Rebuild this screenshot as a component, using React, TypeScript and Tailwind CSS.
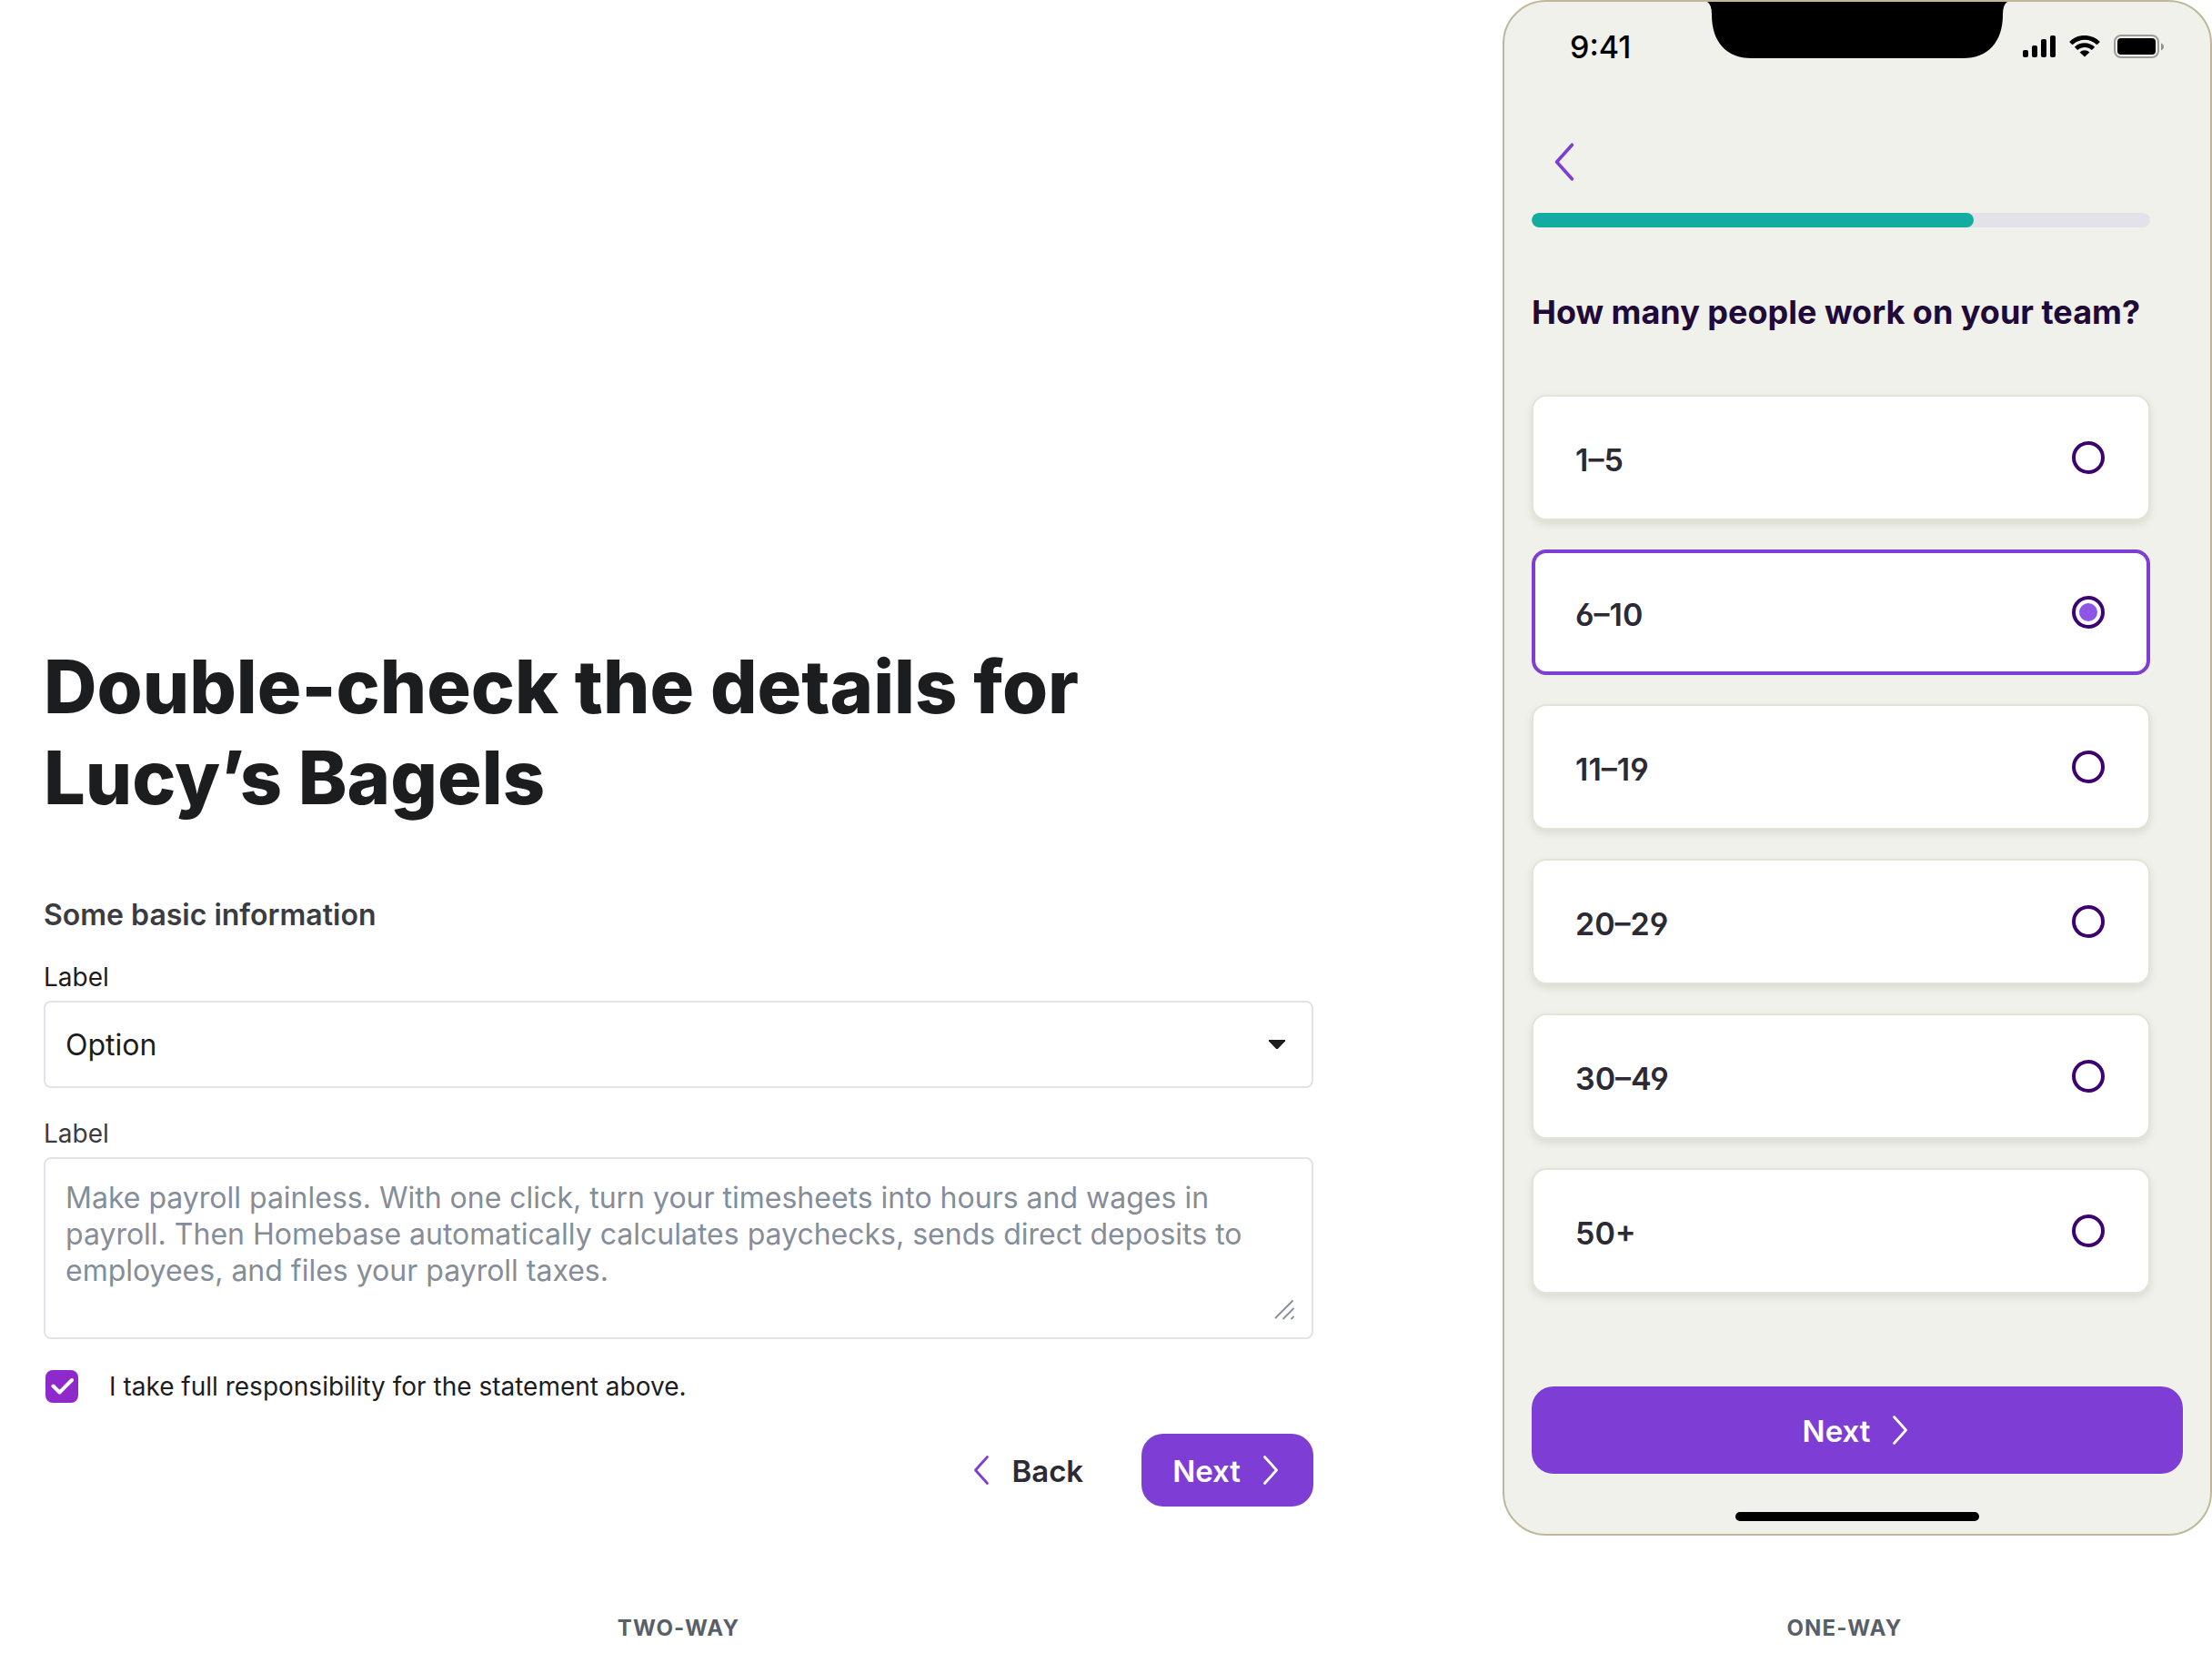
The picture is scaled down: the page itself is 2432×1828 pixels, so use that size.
import { useState } from "react";

const sizes = ["1–5", "6–10", "11–19", "20–29", "30–49", "50+"];

function Chevron({ dir, className }: { dir: "left" | "right"; className: string }) {
  return (
    <svg viewBox="0 0 18 34" className={className} fill="none" stroke="currentColor" strokeWidth="2.8" strokeLinecap="round" strokeLinejoin="round" aria-hidden="true">
      <path d={dir === "left" ? "M15.500 2.500 2.500 17 15.500 31.500" : "M2.500 2.500 15.500 17 2.500 31.500"} />
    </svg>
  );
}

function StatusIcons() {
  return (
    <div className="flex items-center gap-[15px]">
      <svg viewBox="0 0 36 24" className="h-6 w-9" fill="#000" aria-label="Signal">
        <rect x="0" y="16" width="6" height="8" rx="2" />
        <rect x="10" y="11" width="6" height="13" rx="2" />
        <rect x="20" y="4" width="6" height="20" rx="2" />
        <rect x="30" y="0" width="6" height="24" rx="2" />
      </svg>
      <svg viewBox="0 0 34 24" className="h-6 w-[34px]" aria-label="Wi-Fi">
        <g fill="none" stroke="#000" strokeWidth="4.8">
          <path d="M1.800 8.600a21.600 21.600 0 0 1 30.400 0" />
          <path d="M7.500 14.400a13.600 13.600 0 0 1 19 0" />
        </g>
        <path d="M17 23.600 11.600 18.400a7.800 7.800 0 0 1 10.800 0z" />
      </svg>
      <svg viewBox="0 0 56 26" className="h-[26px] w-14" aria-label="Battery">
        <rect x="1" y="1" width="48" height="24" rx="7" fill="none" stroke="#000" strokeOpacity=".35" strokeWidth="2" />
        <rect x="4" y="4" width="42" height="18" rx="4" />
        <path d="M52 9.500v8c1.800-.8 3-2.200 3-4s-1.200-3.200-3-4z" fillOpacity=".4" />
      </svg>
    </div>
  );
}

export default function App() {
  const [team, setTeam] = useState("6–10");
  const [agree, setAgree] = useState(true);
  return (
    <main className="flex w-full items-end gap-[208px] bg-white pb-[22px] font-['Inter',sans-serif] text-[#1c1d1f]">
      <section className="flex min-w-0 flex-1 flex-col pl-12">
        <h1 className="text-[81px] leading-[100px] font-extrabold">
          Double-check the details for
          <br />
          Lucy’s Bagels
        </h1>
        <h2 className="mt-[81px] text-[32px] leading-10 font-semibold text-[#3a3c42]">Some basic information</h2>
        <label htmlFor="option" className="mt-[30px] text-[28px] leading-9">Label</label>
        <div className="relative mt-2">
          <select id="option" className="h-24 w-full appearance-none rounded-lg border-2 border-[#e2e2e8] bg-white px-[22px] pt-0.5 text-[32px]">
            <option>Option</option>
          </select>
          <svg viewBox="0 0 18 10" className="pointer-events-none absolute top-[43px] right-[31px] h-[10px] w-[18px]" aria-hidden="true">
            <path d="M0 0h18v1.500L9.800 10H8.200L0 1.500z" fill="#1c1d1f" />
          </svg>
        </div>
        <label htmlFor="statement" className="mt-8 text-[28px] leading-9 text-[#3a3c42]">Label</label>
        <div className="relative mt-2 flex">
          <textarea
            id="statement"
            className="h-[200px] w-full resize-none rounded-lg border-2 border-[#e2e2e8] px-[22px] pt-[23px] text-[32px] leading-10 placeholder:text-[#858d99]"
            placeholder="Make payroll painless. With one click, turn your timesheets into hours and wages in payroll. Then Homebase automatically calculates paychecks, sends direct deposits to employees, and files your payroll taxes."
          />
          <svg viewBox="0 0 22 22" className="pointer-events-none absolute right-[21px] bottom-[21px] h-[22px] w-[22px]" fill="none" stroke="#858d99" strokeWidth="1.800" strokeLinecap="round" aria-hidden="true">
            <path d="M1.500 19.500 20 1M10 20.500 21 9.500M19 20.500l2-2" />
          </svg>
        </div>
        <label className="mt-8 flex items-center gap-[34px] pl-0.5 text-[28px] leading-10">
          <span className="relative flex">
            <input type="checkbox" checked={agree} onChange={(e) => setAgree(e.target.checked)} className="size-9 appearance-none rounded-lg border-2 border-[#8e29cc] checked:bg-[#8e29cc]" />
            {agree && (
              <svg viewBox="0 0 36 36" className="pointer-events-none absolute inset-0" fill="none" stroke="#fff" strokeWidth="4" strokeLinecap="round" strokeLinejoin="round" aria-hidden="true">
                <path d="m8.500 17.500 7 7L29 11" />
              </svg>
            )}
          </span>
          I take full responsibility for the statement above.
        </label>
        <div className="mt-8 flex items-center justify-end gap-8 text-[33px] font-semibold">
          <button type="button" className="flex h-20 items-center gap-6 px-8 text-[#2b2a35]">
            <Chevron dir="left" className="h-[34px] w-[18px] text-[#7e3dd4]" />
            <span className="pt-1">Back</span>
          </button>
          <button type="button" className="flex h-20 items-center gap-6 rounded-3xl bg-[#7e3dd4] pr-[38px] pl-[34px] text-white">
            <span className="pt-1">Next</span>
            <Chevron dir="right" className="h-[34px] w-[18px]" />
          </button>
        </div>
        <p className="mt-[118px] text-center text-2xl leading-8 font-bold tracking-wider text-[#585f67]">TWO-WAY</p>
      </section>

      <section className="flex w-[780px] shrink-0 flex-col">
        <div className="flex flex-col rounded-[48px] border-2 border-[#bdb99a] bg-[#f0f1eb] px-[30px] pb-[14px]">
          <header className="grid h-[102px] grid-cols-[1fr_330px_1fr] items-start">
            <time className="pt-[29px] pl-[42px] text-[34px] leading-[42px] font-medium text-black">9:41</time>
            <svg viewBox="0 0 330 62" className="h-[62px] w-[330px]" aria-hidden="true">
              <path d="M0 0h330q-5 3-5 14c0 30-16 48-44 48H49C21 62 5 44 5 14Q5 3 0 0z" />
            </svg>
            <div className="flex justify-end pt-9 pr-5">
              <StatusIcons />
            </div>
          </header>
          <button type="button" aria-label="Go back" className="mt-[52px] ml-6 flex h-11 w-8 items-center text-[#7e3dd4]">
            <Chevron dir="left" className="h-11 w-6" />
          </button>
          <div className="mr-9 flex flex-col">
            <div role="progressbar" aria-valuenow={71} className="mt-[34px] h-4 overflow-hidden rounded-full bg-[#e2e2e8]">
              <div className="h-full w-[71.500%] rounded-full bg-[#12aca1]" />
            </div>
            <h2 id="team" className="mt-[71px] text-4xl leading-[44px] font-bold whitespace-nowrap text-[#1f0a38]">How many people work on your team?</h2>
            <div role="radiogroup" aria-labelledby="team" className="mt-[69px] flex flex-col gap-8">
              {sizes.map((s) => (
                <label key={s} className="flex h-[138px] items-center justify-between rounded-2xl border-2 border-[#e5e3d5] bg-white pr-12 pl-[46px] text-[34px] font-semibold text-[#2b2a35] shadow-[0_4px_8px_rgba(60,60,30,0.12)] [font-feature-settings:'cv03','cv04'] has-checked:border-4 has-checked:border-[#7e3dd4] has-checked:pr-[46px] has-checked:pl-11 has-checked:shadow-none">
                  <span className="pt-1">{s}</span>
                  <input type="radio" name="team" checked={team === s} onChange={() => setTeam(s)} className="size-9 appearance-none rounded-full border-4 border-[#3b0270] bg-white bg-clip-content p-1 checked:bg-[#8f56e6]" />
                </label>
              ))}
            </div>
          </div>
          <button type="button" className="mt-[102px] flex h-24 items-center justify-center gap-6 rounded-3xl bg-[#7e3dd4] pr-1 text-[33px] font-semibold text-white">
            <span className="pt-1">Next</span>
            <Chevron dir="right" className="h-[34px] w-[18px]" />
          </button>
          <div className="mt-[42px] h-[10px] w-[268px] self-center rounded-full bg-black" />
        </div>
        <p className="mt-[86px] mr-7 text-center text-2xl leading-8 font-bold tracking-wider text-[#585f67]">ONE-WAY</p>
      </section>
    </main>
  );
}
